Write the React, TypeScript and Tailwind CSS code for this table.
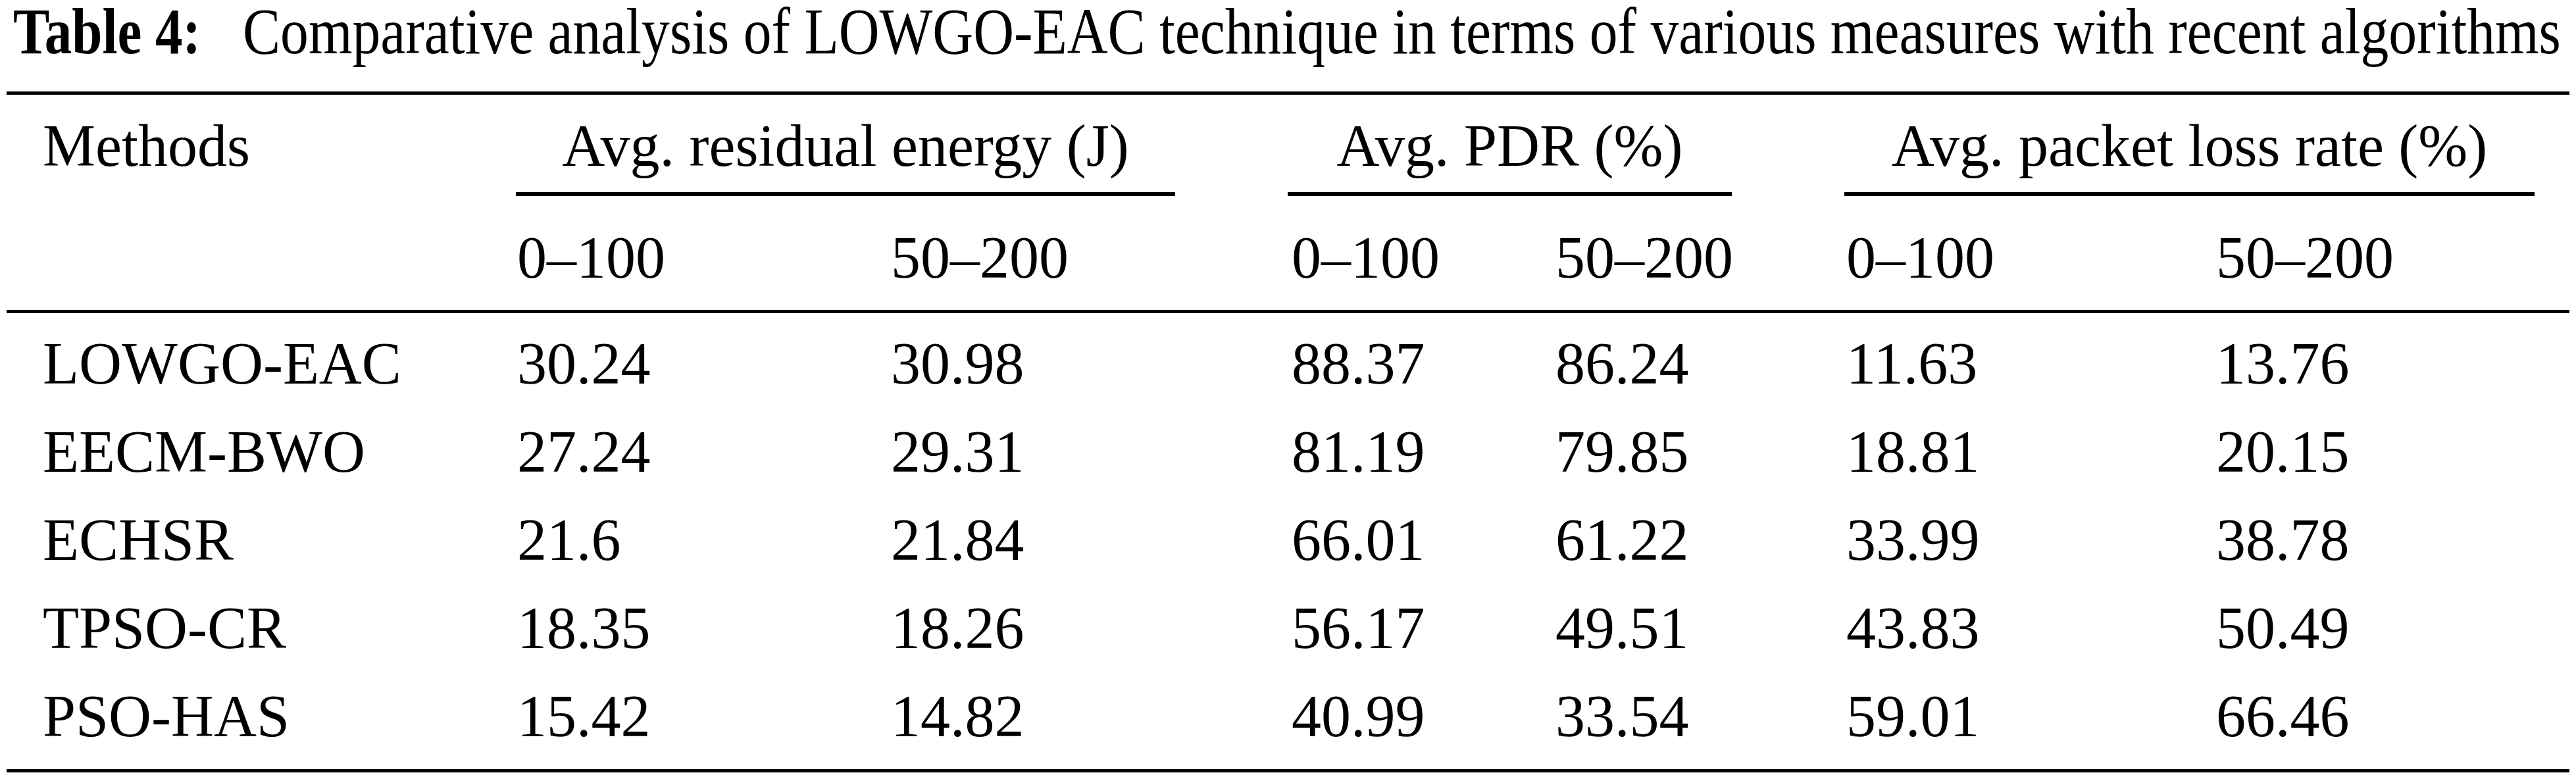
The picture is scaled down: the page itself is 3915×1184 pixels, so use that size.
const rows = [
  ["LOWGO-EAC", "30.24", "30.98", "88.37", "86.24", "11.63", "13.76"],
  ["EECM-BWO", "27.24", "29.31", "81.19", "79.85", "18.81", "20.15"],
  ["ECHSR", "21.6", "21.84", "66.01", "61.22", "33.99", "38.78"],
  ["TPSO-CR", "18.35", "18.26", "56.17", "49.51", "43.83", "50.49"],
  ["PSO-HAS", "15.42", "14.82", "40.99", "33.54", "59.01", "66.46"],
];

const cols = "grid grid-cols-[721px_568px_609px_401px_442px_562px_1fr]";

const App = () => {
  return (
    <div className="w-[3915px] h-[1184px] overflow-hidden bg-white px-[10px] text-black font-['Liberation_Serif',serif]">
      <div className="-mt-[2px] mb-[41px] pl-[10px] flex text-[100px] leading-[100px] whitespace-nowrap">
        <span className="w-[293px] shrink-0">
          <span className="inline-block origin-left scale-x-[0.83] font-bold">Table 4:</span>
        </span>
        <span className="ml-[56px] inline-block origin-left scale-x-[0.856]">
          Comparative analysis of LOWGO-EAC technique in terms of various measures with recent algorithms
        </span>
      </div>

      <div className="border-t-[5px] border-b-[5px] border-black text-[90px] leading-[90px]">
        <div className="border-b-[5px] border-black pl-[55px] pt-[33px] pb-[34px]">
          <div className={cols}>
            <div>Methods</div>
            <div className="col-span-2 mr-[177px] -ml-[2px] border-b-[6px] border-black pb-[25px] text-center">
              Avg. residual energy (J)
            </div>
            <div className="col-span-2 mr-[174px] -ml-[6px] border-b-[6px] border-black pb-[25px] text-center">
              Avg. PDR (%)
            </div>
            <div className="col-span-2 mr-[53px] -ml-[3px] border-b-[6px] border-black pb-[25px] text-center">
              Avg. packet loss rate (%)
            </div>
          </div>
          <div className={`${cols} mt-[49px]`}>
            <div></div>
            <div>0–100</div>
            <div>50–200</div>
            <div>0–100</div>
            <div>50–200</div>
            <div>0–100</div>
            <div>50–200</div>
          </div>
        </div>

        <div className={`${cols} gap-y-[44px] pl-[55px] pt-[32px] pb-[35px]`}>
          {rows.map((r) =>
            r.map((c, i) => <div key={r[0] + i}>{c}</div>)
          )}
        </div>
      </div>
    </div>
  );
};

export default App;
